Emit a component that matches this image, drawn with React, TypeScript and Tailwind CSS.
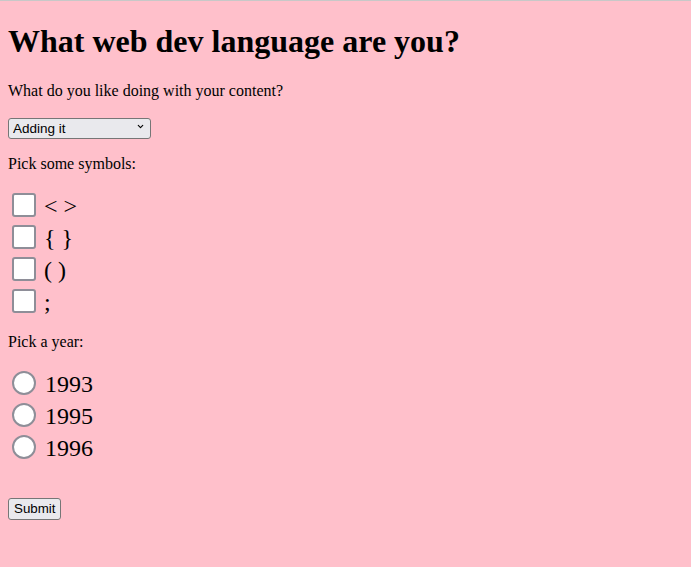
import { ChevronDown } from "lucide-react";

const symbols = ["< >", "{ }", "( )", ";"];
const years = ["1993", "1995", "1996"];

const App = () => {
  return (
    <div className="min-h-screen border-t border-[#c8c8c8] bg-[#ffc0cb] pt-px font-['Liberation_Serif',serif] text-black">
      <form className="px-2 pb-2" onSubmit={(e) => e.preventDefault()}>
        <h1 className="my-[21.44px] text-[32px] leading-[normal] font-bold">
          What web dev language are you?
        </h1>

        <p className="my-4 text-base leading-[normal]">
          What do you like doing with your content?
        </p>

        <div className="flex h-[23px] items-start">
          <div className="relative">
            <select
              defaultValue="adding"
              className="h-[21px] w-[143px] appearance-none rounded-[3px] border border-[#767676] bg-[#e9e9ed] pl-[4px] font-['Liberation_Sans',sans-serif] text-[13.5px] text-black outline-none"
            >
              <option value="adding">Adding it</option>
              <option value="styling">Styling it</option>
              <option value="moving">Moving it</option>
            </select>
            <ChevronDown
              className="pointer-events-none absolute top-[6px] right-[6px] h-[9px] w-[9px] text-black"
              strokeWidth={3}
            />
          </div>
        </div>

        <p className="my-4 text-base leading-[normal]">Pick some symbols:</p>

        <div className="flex flex-col">
          {symbols.map((symbol) => (
            <label key={symbol} className="flex h-8 items-center">
              <input
                type="checkbox"
                className="ml-1 h-6 w-6 appearance-none rounded-[3px] border-2 border-[#8e8e98] bg-white"
              />
              <span className="mt-[3px] ml-2 text-[24px] leading-[normal]">{symbol}</span>
            </label>
          ))}
        </div>

        <p className="my-4 text-base leading-[normal]">Pick a year:</p>

        <div className="flex flex-col">
          {years.map((year) => (
            <label key={year} className="flex h-8 items-center">
              <input
                type="radio"
                name="year"
                className="ml-1 h-6 w-6 appearance-none rounded-full border-2 border-[#8e8e98] bg-white"
              />
              <span className="mt-[4px] ml-[9px] text-[24px] leading-[normal]">{year}</span>
            </label>
          ))}
        </div>

        <button
          type="submit"
          className="mt-[35px] h-[22px] rounded-[3px] border border-[#767676] bg-[#e9e9ed] px-[5px] font-['Liberation_Sans',sans-serif] text-[13.33px] leading-none text-black"
        >
          Submit
        </button>
      </form>
    </div>
  );
};

export default App;
